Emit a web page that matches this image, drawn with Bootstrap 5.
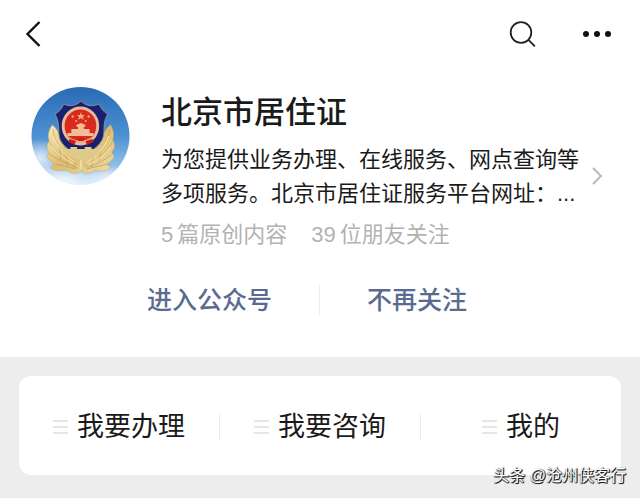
<!DOCTYPE html>
<html lang="zh-CN">
<head>
<meta charset="utf-8">
<meta name="viewport" content="width=device-width, initial-scale=1">
<title>北京市居住证</title>
<link href="https://cdn.jsdelivr.net/npm/bootstrap@5.3.0/dist/css/bootstrap.min.css" rel="stylesheet">
<style>
body{font-family:"Liberation Sans","Noto Sans CJK SC",sans-serif;background:#ededed;color:#1a1a1a}
.btn{--bs-btn-border-width:0px;--bs-btn-padding-x:0px;--bs-btn-padding-y:0px}
.btn svg,.avatar svg{display:block}
.topbar{height:68px;padding:0 28px 0 24px}
.tools{gap:46px}
.profile{padding:18px 36px 0 30px;gap:31px}
.avatar{width:100px}
.profile h1{font-size:31px;line-height:38px;font-weight:500;margin:8px 0 11px}
.intro{font-size:22px;line-height:34px;margin:0}
.stats{font-size:22px;line-height:34px;gap:24px;color:#b2b2b2;margin-top:7px}
.stats b{font-weight:400;margin-right:4px}
.more{margin:15px 0 0 12px}
.actions{padding:28px 26px 37px 0}
.actions .btn{font-size:25px;line-height:40px;padding:0 47px;font-weight:500;color:#5a6b8f}
.rule{width:1px;height:30px;background:#ebebeb}
.menu-area{padding:19px 19px 23px}
.menu-card{height:99px;border-radius:12px;padding-top:2px}
.menu-card .btn{font-size:27px;line-height:40px;gap:9px;color:#1a1a1a}
.menu-card .rule{height:27px}
.credit{right:14px;bottom:10px;font-size:16px;line-height:24px;color:#fff;text-shadow:1px 1px 0 #222,1px 0 1px #333,0 1px 1px #333}
</style>
<script src="https://cdn.jsdelivr.net/npm/bootstrap@5.3.0/dist/js/bootstrap.bundle.min.js"></script>
</head>
<body>
<div class="position-relative">
<header class="bg-white">
  <nav class="topbar d-flex justify-content-between align-items-center">
    <button class="btn" type="button" aria-label="返回"><svg width="20" height="28" viewBox="0 0 20 28" fill="none" stroke="#111" stroke-width="2.4"><path d="M15.500 2 3.500 14l12 12"/></svg></button>
    <div class="tools d-flex align-items-center">
      <button class="btn" type="button" aria-label="搜索"><svg width="28" height="28" viewBox="0 0 28 28" fill="none" stroke="#222" stroke-width="1.800"><circle cx="13" cy="12.500" r="10.300"/><path d="m20.200 19.700 6.700 6.700"/></svg></button>
      <button class="btn" type="button" aria-label="更多"><svg width="30" height="8" viewBox="0 0 30 8" fill="#111"><circle cx="4" cy="4" r="3"/><circle cx="15" cy="4" r="3"/><circle cx="26" cy="4" r="3"/></svg></button>
    </div>
  </nav>
  <section class="profile d-flex align-items-start">
    <div class="avatar flex-shrink-0">
      <svg width="101" height="100" viewBox="0 0 101 100" role="img" aria-label="警徽">
        <defs>
          <linearGradient id="sky" x1="0" y1="0" x2="0" y2="1"><stop offset="0" stop-color="#286bb5"/><stop offset=".5" stop-color="#4d91d2"/><stop offset=".8" stop-color="#91bfe7"/><stop offset="1" stop-color="#d8eafa"/></linearGradient>
          <linearGradient id="gold" x1="0" y1="0" x2="1" y2="1"><stop offset="0" stop-color="#f6eabb"/><stop offset=".5" stop-color="#dcbd72"/><stop offset="1" stop-color="#eedfaa"/></linearGradient>
          <radialGradient id="cloud"><stop offset="0" stop-color="#fff" stop-opacity=".75"/><stop offset="1" stop-color="#fff" stop-opacity="0"/></radialGradient>
          <clipPath id="disc"><circle cx="50.500" cy="50" r="49"/></clipPath>
        </defs>
        <g clip-path="url(#disc)">
          <path fill="url(#sky)" d="M0 0h101v100H0z"/>
          <ellipse cx="10" cy="72" rx="21" ry="19" fill="url(#cloud)"/>
          <ellipse cx="32" cy="94" rx="36" ry="16" fill="url(#cloud)"/>
          <ellipse cx="80" cy="93" rx="28" ry="13" fill="url(#cloud)"/>
        </g>
        <g transform="translate(1 3) scale(.96 1)">
        <path fill="url(#gold)" stroke="#c9a45a" stroke-width=".5" d="M22 36c-4 6-5 11-3 16-3 3-3 8 0 12l-2 3c0 3 3 5 7 8l-4 4c4 3 11 3 18 2 4 5 11 4 14 1 4 3 10 4 14-1 6 2 13 1 17-2l-4-4c5-3 8-6 7-9l-2-3c4-4 4-8 1-12 2-5 1-10-2-15-5 3-8 9-9 15L63 64H40L30 51c0-6-3-12-8-15z"/>
        <path fill="none" stroke="#b08a45" stroke-width=".5" d="M23 40c1 13 8 23 25 36M19 53c6 10 15 17 28 25M19 65c9 5 18 10 29 14M82 40c-2 14-12 26-27 37M85 53c-6 10-17 19-28 25M85 65c-8 6-18 11-27 14M25 75l22 5M80 75l-22 5M30 58l1 13M37 63l1 15M73 58l-2 14M65 65l-2 13"/>
        <path fill="none" stroke="#fff0ba" stroke-width="1" d="M23 47c5 12 12 19 22 26M21 57c6 8 14 13 23 18M81 47c-5 13-13 20-23 27M83 58c-7 9-14 13-23 18M52 66v14"/>
        <path fill="#18206f" stroke="#a99a86" stroke-width=".8" d="M52 12c-5 5-12 6-18 3-2 5-5 8-9 10 4 7 4 13 4 19 0 11 10 18 23 22 14-4 24-12 24-23 0-6 0-12 4-18-4-2-7-5-9-10-7 3-14 2-19-3z"/>
        <path fill="#e0ca88" d="M29 58h6v2h6v-2h7v2h8v-2h7v2h6v-2h6l-7 8-16 5-15-4z"/>
        <circle cx="51.500" cy="37" r="18" fill="#d72a21" stroke="#e9bb9a" stroke-width="3"/>
        <path fill="#f4ae6c" d="m52 23 1 3h3l-2 2 1 3-3-2-3 2 1-3-2-2h3z"/>
        <g fill="#f2ad65"><circle cx="43.500" cy="27.500" r="1.200"/><circle cx="60" cy="27.500" r="1.200"/><circle cx="47" cy="32" r="1.100"/><circle cx="57" cy="32" r="1.100"/></g>
        <path fill="#f1bd98" d="m47 36 5-2 5 2-1 2h-1v2h6v4h4v3H38v-3h4v-4h7v-2h-1z"/>
        <path fill="none" stroke="#ecb080" stroke-width="2" d="M37 47c5 6 9 4 14 6 5-2 10 0 15-6M42 53h19"/>
        <path fill="#c91c1e" d="m40 50 7 2-2 4-6-3zm24 0-7 2 1 4 7-3zM49 49h6v3h-6z"/>
        </g>
      </svg>
    </div>
    <div class="flex-grow-1">
      <h1>北京市居住证</h1>
      <div class="d-flex align-items-start">
        <p class="intro flex-grow-1">为您提供业务办理、在线服务、网点查询等<br>多项服务。北京市居住证服务平台网址：...</p>
        <a class="more" href="#" aria-label="查看详情"><svg class="d-block" width="12" height="36" viewBox="0 0 12 36" fill="none" stroke="#b8b8b8" stroke-width="2"><path d="m1 10 8 8-8 8"/></svg></a>
      </div>
      <div class="stats d-flex"><span><b>5</b>篇原创内容</span><span><b>39</b>位朋友关注</span></div>
    </div>
  </section>
  <div class="actions d-flex justify-content-center align-items-center">
    <button class="btn" type="button">进入公众号</button>
    <span class="rule"></span>
    <button class="btn" type="button">不再关注</button>
  </div>
</header>
<main class="menu-area">
  <div class="menu-card bg-white d-flex align-items-center">
    <button class="btn d-flex justify-content-center align-items-center flex-fill w-100" type="button"><svg width="15" height="16" viewBox="0 0 15 16" stroke="#dedede" stroke-width="1.600"><path d="M0 2h15M0 8h15M0 14h15"/></svg>我要办理</button>
    <span class="rule flex-shrink-0"></span>
    <button class="btn d-flex justify-content-center align-items-center flex-fill w-100" type="button"><svg width="15" height="16" viewBox="0 0 15 16" stroke="#dedede" stroke-width="1.600"><path d="M0 2h15M0 8h15M0 14h15"/></svg>我要咨询</button>
    <span class="rule flex-shrink-0"></span>
    <button class="btn d-flex justify-content-center align-items-center flex-fill w-100" type="button"><svg width="15" height="16" viewBox="0 0 15 16" stroke="#dedede" stroke-width="1.600"><path d="M0 2h15M0 8h15M0 14h15"/></svg>我的</button>
  </div>
</main>
<div class="credit position-absolute">头条 @沧州侠客行</div>
</div>
</body>
</html>
